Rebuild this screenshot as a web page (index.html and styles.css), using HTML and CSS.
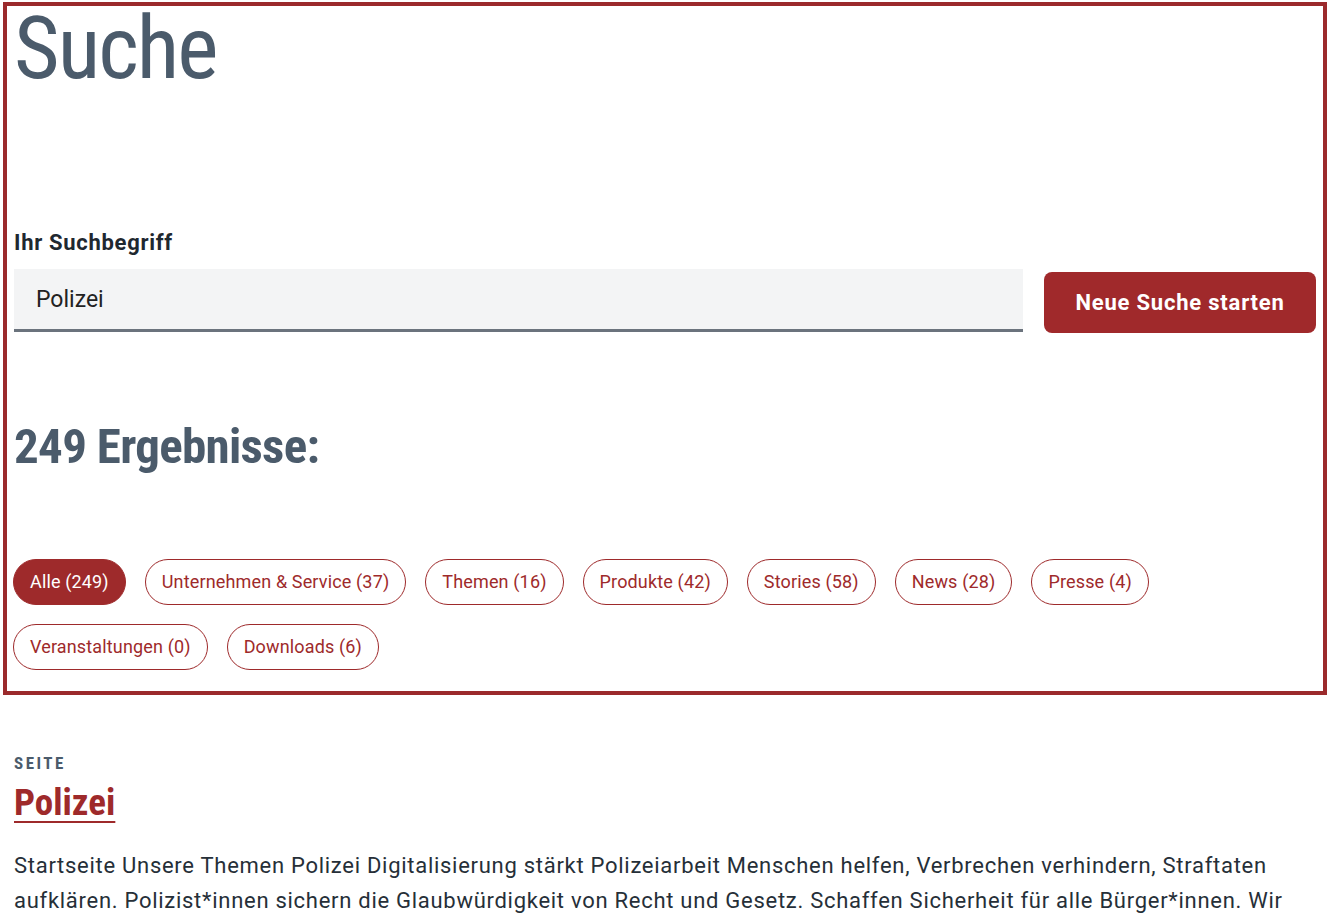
FILE: index.html
```html
<!DOCTYPE html>
<html lang="de">
<head>
    <meta charset="UTF-8">
    <meta name="viewport" content="width=device-width, initial-scale=1.0">
    <title>Suche</title>
    <link rel="stylesheet" href="styles.css">
</head>
<body>
    <div class="search-box">
        <h1 class="page-title">Suche</h1>

        <form class="search-form">
            <label for="search-term" class="search-label">Ihr Suchbegriff</label>
            <div class="search-row">
                <input type="text" id="search-term" class="search-input" value="Polizei">
                <button type="submit" class="search-btn">Neue Suche starten</button>
            </div>
        </form>

        <h2 class="result-count">249 Ergebnisse:</h2>

        <div class="filters">
            <a href="#" class="chip active">Alle (249)</a>
            <a href="#" class="chip">Unternehmen &amp; Service (37)</a>
            <a href="#" class="chip">Themen (16)</a>
            <a href="#" class="chip">Produkte (42)</a>
            <a href="#" class="chip">Stories (58)</a>
            <a href="#" class="chip">News (28)</a>
            <a href="#" class="chip">Presse (4)</a>
            <a href="#" class="chip">Veranstaltungen (0)</a>
            <a href="#" class="chip">Downloads (6)</a>
        </div>
    </div>

    <div class="results">
        <div class="result">
            <div class="result-type">Seite</div>
            <h3 class="result-title"><a href="#">Polizei</a></h3>
            <p class="result-text">Startseite Unsere Themen Polizei Digitalisierung stärkt Polizeiarbeit Menschen helfen, Verbrechen verhindern, Straftaten aufklären. Polizist*innen sichern die Glaubwürdigkeit von Recht und Gesetz. Schaffen Sicherheit für alle Bürger*innen. Wir unterstützen sie dabei mit sicheren digitalen Lösungen.</p>
        </div>
    </div>
</body>
</html>
```

FILE: styles.css
```css
body {
    margin: 0;
    font-family: Roboto, "Liberation Sans", Arial, sans-serif;
    color: #262f38;
    background-color: #fff;
}

.search-box {
    margin: 2px 1px 0 3px;
    border: 4px solid #9b2a2c;
    padding: 2px 7px 21px 7px;
}

.page-title {
    margin: 0 0 141px 0;
    font-size: 88px;
    line-height: 80px;
    font-weight: 400;
    font-stretch: condensed;
    letter-spacing: -2px;
    color: #4b5b6b;
}

.search-label {
    display: block;
    font-size: 22px;
    line-height: 28px;
    font-weight: 700;
    letter-spacing: 0.7px;
    color: #1f2830;
    margin-bottom: 12px;
}

.search-row {
    display: flex;
    align-items: flex-start;
    gap: 21px;
}

.search-input {
    flex: 1;
    height: 63px;
    box-sizing: border-box;
    padding: 0 22px;
    font-family: inherit;
    font-size: 23px;
    color: #222;
    background-color: #f3f4f5;
    border: none;
    border-bottom: 3px solid #6b737d;
    outline: none;
}

.search-btn {
    margin-top: 3px;
    height: 61px;
    width: 272px;
    font-family: inherit;
    font-size: 22px;
    font-weight: 700;
    letter-spacing: 0.8px;
    color: #fff;
    background-color: #a0292b;
    border: none;
    border-radius: 8px;
    cursor: pointer;
}

.result-count {
    margin: 86px 0 84px 0;
    font-size: 49px;
    line-height: 56px;
    font-weight: 700;
    font-stretch: condensed;
    letter-spacing: -0.7px;
    color: #4b5b6b;
}

.filters {
    display: flex;
    flex-wrap: wrap;
    gap: 19px;
    margin-left: -1px;
}

.chip {
    display: inline-block;
    padding: 10px 16px;
    font-size: 18px;
    line-height: 24px;
    letter-spacing: 0.15px;
    color: #9e2a2b;
    text-decoration: none;
    border: 1px solid #9e2a2b;
    border-radius: 999px;
}

.chip.active {
    background-color: #9e2a2b;
    color: #fff;
}

.results {
    padding: 0 14px;
}

.result {
    padding-top: 58px;
}

.result-type {
    font-size: 17px;
    line-height: 20px;
    font-weight: 700;
    font-stretch: condensed;
    letter-spacing: 2.5px;
    text-transform: uppercase;
    color: #4b5b6b;
}

.result-title {
    margin: 8px 0 23px 0;
    font-size: 37px;
    line-height: 44px;
    font-weight: 700;
    font-stretch: condensed;
}

.result-title a {
    color: #9e2a2b;
    text-underline-offset: 6px;
    text-decoration-thickness: 2px;
}

.result-text {
    margin: 0;
    font-size: 22px;
    line-height: 35px;
    letter-spacing: 0.72px;
    color: #262f38;
}
```
